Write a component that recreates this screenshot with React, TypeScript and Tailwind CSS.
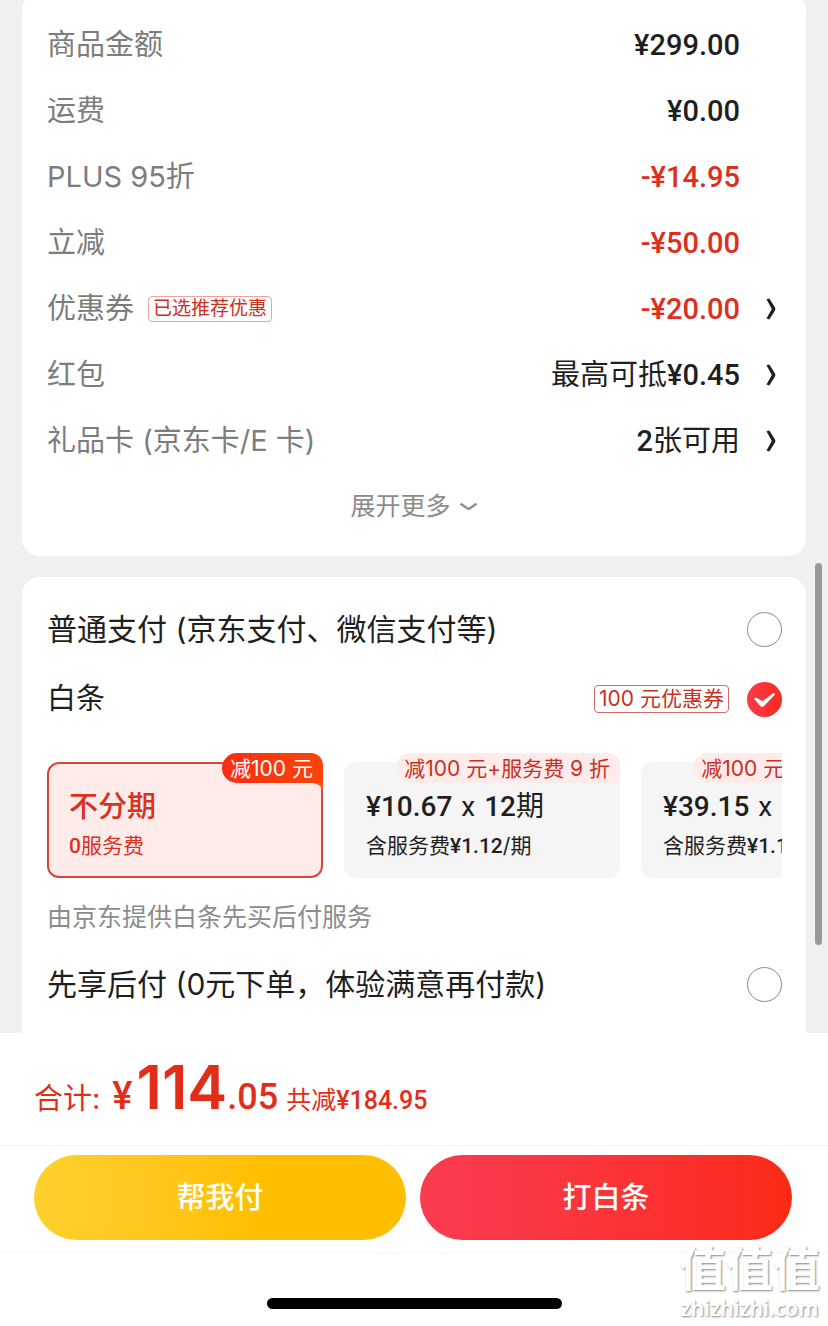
import { useState } from 'react';

const summary = [
  { label: '商品金额', value: '¥299.00' },
  { label: '运费', value: '¥0.00' },
  { label: 'PLUS 95折', value: '-¥14.95', discount: true },
  { label: '立减', value: '-¥50.00', discount: true },
  { label: '优惠券', badge: '已选推荐优惠', value: '-¥20.00', discount: true, link: true },
  { label: '红包', value: '最高可抵¥0.45', link: true },
  { label: '礼品卡 (京东卡/E 卡)', value: '2张可用', link: true },
];

const plans = [
  { title: '不分期', fee: '0服务费', tag: '减100 元' },
  { title: '¥10.67', times: '12期', fee: '含服务费¥1.12/期', tag: '减100 元+服务费 9 折' },
  { title: '¥39.15', times: '3期', fee: '含服务费¥1.12/期', tag: '减100 元+服务费 9 折' },
];

function ChevronRight() {
  return (
    <svg className="ml-[26px] mr-[5px] h-[22px] w-[10px]" viewBox="0 0 10 22" aria-hidden="true">
      <path d="M0.5 1.2 L3.3 0.5 L9 9.4 Q9.8 11 9 12.6 L3.3 21.5 L0.5 20.4 L5.8 11 Z" fill="#1f1f1f" />
    </svg>
  );
}

function Radio({ id, checked, onChange }: { id: string; checked: boolean; onChange: () => void }) {
  return (
    <span className="relative flex h-[35px] w-[35px] shrink-0">
      <input
        type="radio"
        id={id}
        name="payment"
        checked={checked}
        onChange={onChange}
        className="h-full w-full appearance-none rounded-full border border-[#8a8a8a] bg-white checked:border-0 checked:bg-linear-to-r checked:from-[#f93a4a] checked:to-[#fb2a18]"
      />
      {checked && (
        <svg className="pointer-events-none absolute inset-0" viewBox="0 0 35 35" aria-hidden="true">
          <path d="M7 16.6 Q8.5 14.8 10.8 16.4 L15.4 19.2 L26.4 11 Q28.6 10.8 27.6 13 L17 23.9 Q15 25.8 13.2 23.9 Z" fill="#fff" />
        </svg>
      )}
    </span>
  );
}

export default function App() {
  const [payment, setPayment] = useState('baitiao');
  const [plan, setPlan] = useState(0);

  return (
    <div className="flex h-screen flex-col bg-[#f0f0f0] font-[Inter,'Noto_Sans_CJK_SC',sans-serif] text-[29px] leading-[40px] text-[#1f1f1f]">
      <main className="relative min-h-0 flex-1 overflow-hidden px-[22px]">
        {/* Order summary */}
        <section className="-mt-2 rounded-[18px] bg-white px-[25px] pt-5 pb-[18px]">
          {summary.map((row) => (
            <div key={row.label} className="flex h-[66px] items-center">
              <span className="text-[#7d7d7d]">{row.label}</span>
              {row.badge && (
                <span className="ml-[14px] rounded border border-[#eda29c] px-1 text-[19px] leading-6 text-[#c8301f]">
                  {row.badge}
                </span>
              )}
              <span
                className={`ml-auto font-[Roboto,'Noto_Sans_CJK_SC',sans-serif] ${
                  row.discount ? 'font-medium text-[#de2f1d]' : ''
                } ${row.link ? '' : 'mr-[41px] font-medium'}`}
              >
                <Amount text={row.value} />
              </span>
              {row.link && <ChevronRight />}
            </div>
          ))}
          <button className="mx-auto flex h-16 items-center gap-2 text-[25px] text-[#8c8c8c]">
            展开更多
            <svg className="h-[9px] w-[19px]" viewBox="0 0 19 9" fill="none" aria-hidden="true">
              <path d="M1.5 1.8 L8.2 6.3 Q9.5 7.1 10.8 6.3 L17.5 1.8" stroke="#8c8c8c" strokeWidth="2.4" />
            </svg>
          </button>
        </section>

        {/* Payment methods */}
        <section className="mt-[21px] rounded-[18px] bg-white pt-4 pr-6 pb-16 pl-[25px]">
          <div className="flex h-[72px] items-center justify-between">
            <label htmlFor="normal" className="text-[30px]">普通支付 (京东支付、微信支付等)</label>
            <Radio id="normal" checked={payment === 'normal'} onChange={() => setPayment('normal')} />
          </div>
          <div className="flex h-[68px] items-center">
            <label htmlFor="baitiao">白条</label>
            <span className="ml-auto mr-[18px] rounded border border-[#cf6d62] px-1 text-[21px] leading-[26px] text-[#c8301f]">
              100 元优惠券
            </span>
            <Radio id="baitiao" checked={payment === 'baitiao'} onChange={() => setPayment('baitiao')} />
          </div>

          <div className="flex gap-[21px] overflow-hidden pt-[29px]">
            {plans.map((item, index) => {
              const active = plan === index;
              return (
                <button
                  key={item.title}
                  onClick={() => setPlan(index)}
                  className={`relative h-[116px] w-[276px] shrink-0 rounded-xl border-2 px-5 pt-2 text-left ${
                    active ? 'border-[#d8453a] bg-[#feebea] text-[#d9301f]' : 'border-[#f5f5f5] bg-[#f5f5f5]'
                  }`}
                >
                  <span
                    className={`block font-[Roboto,'Noto_Sans_CJK_SC',sans-serif] leading-[44px] ${
                      item.times ? 'text-[28px]' : ''
                    } ${active ? 'font-medium' : ''}`}
                  >
                    <Amount text={item.title} />
                    {item.times && (
                      <>
                        <span className="mx-[9px]">x</span>
                        <Amount text={item.times} />
                      </>
                    )}
                  </span>
                  <span className="block text-[21px] leading-[34px]">
                    <Amount text={item.fee} />
                  </span>
                  <span
                    className={`absolute -top-[11px] -right-0.5 h-[30px] rounded-tl-[15px] rounded-tr-xl rounded-bl-[15px] pr-[10px] pl-2 text-[21px] leading-[31px] whitespace-nowrap ${
                      active ? 'bg-linear-to-r from-[#f92c12] to-[#fb4408] text-white' : 'bg-[#ffebea] text-[#c8301f]'
                    }`}
                  >
                    {item.tag}
                    {active && (
                      <svg className="absolute top-full right-0 h-2 w-[10px]" viewBox="0 0 10 8" aria-hidden="true">
                        <path d="M0 0 H10 V8 Q8 1 0 0 Z" fill="#fb5a1c" />
                      </svg>
                    )}
                  </span>
                </button>
              );
            })}
          </div>

          <p className="h-[78px] text-[25px] leading-[78px] text-[#8c8c8c]">由京东提供白条先买后付服务</p>
          <div className="flex h-14 items-center justify-between">
            <label htmlFor="later" className="text-[30px]">先享后付 (0元下单，体验满意再付款)</label>
            <Radio id="later" checked={payment === 'later'} onChange={() => setPayment('later')} />
          </div>
        </section>

        {/* Scroll indicator */}
        <div className="absolute top-[563px] right-1.5 h-[382px] w-[7px] rounded-full bg-[#999]" />
      </main>

      <footer className="relative bg-white">
        <div className="flex h-[113px] items-baseline border-b border-[#f4f4f4] px-[34px] pt-[18px] text-[#e22d1a]">
          <span>合计:</span>
          <span className="mr-1 ml-3 font-[Roboto] text-[38px] font-medium">¥</span>
          <span className="text-[60px] leading-[72px] font-semibold">114</span>
          <span className="font-[Roboto] text-[36px] font-medium">.05</span>
          <span className="ml-2 text-[25px]">
            <Amount text="共减¥184.95" />
          </span>
        </div>
        <div className="flex gap-[14px] border-b border-[#f4f4f4] pt-[9px] pr-9 pb-3 pl-[34px] text-white">
          <button className="h-[85px] flex-1 rounded-full bg-linear-to-r from-[#ffd02d] to-[#ffbf00] to-60% font-medium">
            帮我付
          </button>
          <button className="h-[85px] flex-1 rounded-full bg-linear-to-r from-[#f93c50] to-[#fc2a14] font-medium">
            打白条
          </button>
        </div>
        <div className="flex h-[73px] items-end justify-center pb-[17px]">
          <div className="h-[11px] w-[295px] rounded-full bg-black" />
        </div>

        {/* Watermark */}
        <div className="absolute right-2 bottom-1 flex flex-col items-center text-white [text-shadow:1px_1px_2px_#888]">
          <span className="text-[47px] leading-[50px] font-bold">值值值</span>
          <span className="font-['Noto_Sans'] text-[21px] leading-7 font-semibold">zhizhizhi.com</span>
        </div>
      </footer>
    </div>
  );
}

// Numbers and currency signs are set in a heavier face than the text around them
function Amount({ text }: { text: string }) {
  return (
    <>
      {text.split(/([-¥\d.]+)/).map((part, i) =>
        i % 2 ? (
          <span key={i} className="font-[Roboto,sans-serif] font-medium">
            {part}
          </span>
        ) : (
          part
        )
      )}
    </>
  );
}
